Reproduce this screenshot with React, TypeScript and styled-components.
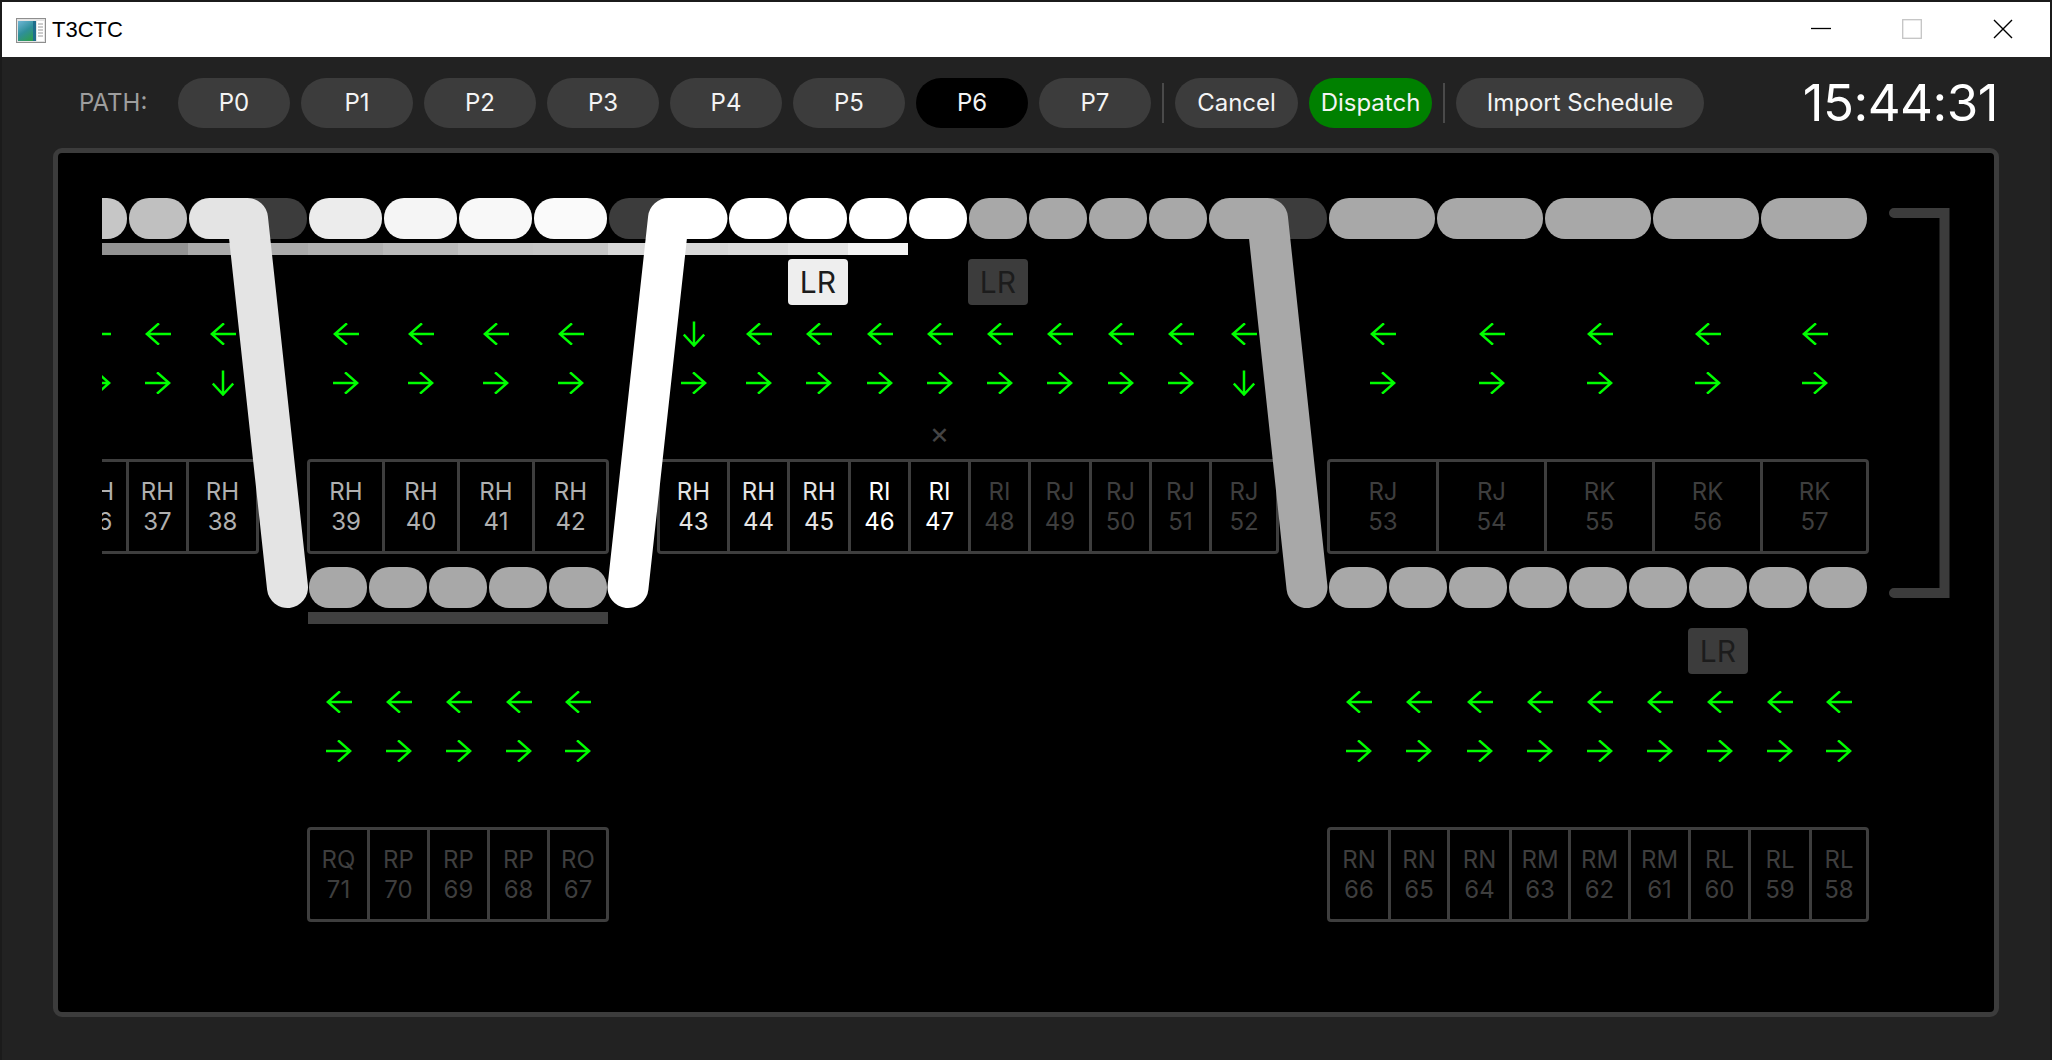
import styled, { createGlobalStyle } from 'styled-components';

type Dir = 'left' | 'right' | 'down';
type Tone = 'idle' | 'active' | 'go';

interface TrackBlock {
  width: number;
  pill: string;
  bar?: string;
  badge?: 'light' | 'dark';
}

interface BlockCell {
  prefix: string;
  num: number;
  width: number;
  color: string;
  top: Dir;
  bottom: Dir;
  mark?: boolean;
}

const DIM = '#3c3c3c';
const TRACK_GRAY = '#a8a8a8';
const LABEL_MID = '#b0b0b0';
const LABEL_BRIGHT = '#e4e4e4';
const LABEL_WHITE = '#ffffff';
const LABEL_DIM = '#3e3e3e';

const cell = (
  prefix: string,
  num: number,
  width: number,
  color: string,
  top: Dir = 'left',
  bottom: Dir = 'right',
  mark = false,
): BlockCell => ({ prefix, num, width, color, top, bottom, mark });

const repeat = (count: number, block: TrackBlock) =>
  Array.from({ length: count }, () => ({ ...block }));

const upperLine: TrackBlock[] = [
  { width: 60, pill: '#c6c6c6', bar: '#939393' },
  { width: 60, pill: '#c0c0c0', bar: '#939393' },
  { width: 120, pill: DIM, bar: '#aaaaaa' },
  { width: 75, pill: '#ececec', bar: '#b1b1b1' },
  { width: 75, pill: '#f5f5f5', bar: '#bababa' },
  { width: 75, pill: '#f8f8f8', bar: '#c4c4c4' },
  { width: 75, pill: '#fafafa', bar: '#c6c6c6' },
  { width: 120, pill: DIM, bar: '#d8d8d8' },
  { width: 60, pill: '#ffffff', bar: '#dcdcdc' },
  { width: 60, pill: '#ffffff', bar: '#e4e4e4', badge: 'light' },
  { width: 60, pill: '#ffffff', bar: '#f4f4f4' },
  { width: 60, pill: '#ffffff' },
  { width: 60, pill: TRACK_GRAY, badge: 'dark' },
  ...repeat(3, { width: 60, pill: TRACK_GRAY }),
  { width: 120, pill: DIM },
  ...repeat(5, { width: 108, pill: TRACK_GRAY }),
];

const lowerLeftLine: TrackBlock[] = repeat(5, { width: 60, pill: TRACK_GRAY, bar: '#404040' });

const lowerRightLine: TrackBlock[] = repeat(9, { width: 60, pill: TRACK_GRAY }).map((b, i) =>
  i === 6 ? { ...b, badge: 'dark' as const } : b,
);

const groupA = [
  cell('RH', 36, 57, LABEL_MID),
  cell('RH', 37, 60, LABEL_MID),
  cell('RH', 38, 70, LABEL_MID, 'left', 'down'),
];

const groupB = [
  cell('RH', 39, 72, LABEL_MID),
  cell('RH', 40, 75, LABEL_MID),
  cell('RH', 41, 75, LABEL_MID),
  cell('RH', 42, 74, LABEL_MID),
];

const groupC = [
  cell('RH', 43, 67, LABEL_BRIGHT, 'down', 'right'),
  cell('RH', 44, 60, LABEL_BRIGHT),
  cell('RH', 45, 61, LABEL_BRIGHT),
  cell('RI', 46, 60, LABEL_WHITE),
  cell('RI', 47, 60, LABEL_WHITE, 'left', 'right', true),
  cell('RI', 48, 60, LABEL_DIM),
  cell('RJ', 49, 61, LABEL_DIM),
  cell('RJ', 50, 60, LABEL_DIM),
  cell('RJ', 51, 60, LABEL_DIM),
  cell('RJ', 52, 67, LABEL_DIM, 'left', 'down'),
];

const groupD = [
  cell('RJ', 53, 106, LABEL_DIM),
  cell('RJ', 54, 108, LABEL_DIM),
  cell('RK', 55, 108, LABEL_DIM),
  cell('RK', 56, 108, LABEL_DIM),
  cell('RK', 57, 106, LABEL_DIM),
];

const groupE = [
  cell('RQ', 71, 57, LABEL_DIM),
  cell('RP', 70, 60, LABEL_DIM),
  cell('RP', 69, 60, LABEL_DIM),
  cell('RP', 68, 60, LABEL_DIM),
  cell('RO', 67, 59, LABEL_DIM),
];

const groupF = [
  cell('RN', 66, 58, LABEL_DIM),
  cell('RN', 65, 59, LABEL_DIM),
  cell('RN', 64, 62, LABEL_DIM),
  cell('RM', 63, 59, LABEL_DIM),
  cell('RM', 62, 60, LABEL_DIM),
  cell('RM', 61, 60, LABEL_DIM),
  cell('RL', 60, 60, LABEL_DIM),
  cell('RL', 59, 61, LABEL_DIM),
  cell('RL', 58, 57, LABEL_DIM),
];

const paths = ['P0', 'P1', 'P2', 'P3', 'P4', 'P5', 'P6', 'P7'];

const GlobalStyle = createGlobalStyle`
  html, body {
    margin: 0;
    padding: 0;
    background: #1b1b1b;
  }

  body {
    font-family: Inter, "Noto Sans", "Liberation Sans", sans-serif;
  }

  * {
    box-sizing: border-box;
  }
`;

const AppIcon = () => (
  <svg width="30" height="25" viewBox="0 0 30 25">
    <defs>
      <linearGradient id="appIconFill" x1="0" y1="0" x2="0.6" y2="1">
        <stop offset="0" stopColor="#6fb6d6" />
        <stop offset="0.55" stopColor="#2f8f9a" />
        <stop offset="1" stopColor="#2e9c55" />
      </linearGradient>
    </defs>
    <rect x="0.5" y="0.5" width="29" height="24" fill="#e4e4e4" stroke="#8e8e8e" />
    <rect x="2" y="3" width="18" height="20" fill="url(#appIconFill)" />
    <rect x="17" y="3" width="3" height="20" fill="#1f6e8c" />
    <rect x="21" y="3" width="7" height="20" fill="#ffffff" />
    <path d="M22 6h5M22 9h5M22 12h5M22 15h5M22 18h5" stroke="#9a9a9a" strokeWidth="1" />
  </svg>
);

const MinimizeIcon = () => (
  <svg width="20" height="20" viewBox="0 0 20 20">
    <path d="M0 9.5h20" stroke="#000" strokeWidth="1.3" />
  </svg>
);

const MaximizeIcon = () => (
  <svg width="20" height="20" viewBox="0 0 20 20">
    <rect x="0.7" y="0.7" width="18.6" height="18.6" fill="none" stroke="#c4c4c4" strokeWidth="1.3" />
  </svg>
);

const CloseIcon = () => (
  <svg width="20" height="20" viewBox="0 0 20 20">
    <path d="M1 1l18 18M19 1L1 19" stroke="#000" strokeWidth="1.4" />
  </svg>
);

const ArrowGlyph = ({ dir }: { dir: Dir }) => {
  if (dir === 'down') {
    return (
      <svg width="22" height="26" viewBox="0 0 22 26">
        <path
          d="M11 0.5V24.5M0.8 13.6L11 24.5L21.2 13.6"
          stroke="#00ff00"
          strokeWidth="2.5"
          fill="none"
        />
      </svg>
    );
  }
  const d = dir === 'left' ? 'M1.5 11H26M14 0.3L1.8 11L14 21.7' : 'M0 11H24.5M12 0.3L24.2 11L12 21.7';
  return (
    <svg width="26" height="22" viewBox="0 0 26 22">
      <path d={d} stroke="#00ff00" strokeWidth="2.5" fill="none" />
    </svg>
  );
};

const TrackLine = ({ blocks }: { blocks: TrackBlock[] }) => (
  <Line>
    {blocks.map((b, i) => (
      <Block key={i} $width={b.width}>
        <Pill $color={b.pill} />
        <Bar $color={b.bar} />
        <BadgeSlot>{b.badge && <Badge $tone={b.badge}>LR</Badge>}</BadgeSlot>
      </Block>
    ))}
  </Line>
);

const LabelGroup = ({ cells }: { cells: BlockCell[] }) => (
  <Group>
    <ArrowRow>
      {cells.map((c, i) => (
        <ArrowCell key={c.num} $width={c.width} $first={i === 0}>
          <ArrowGlyph dir={c.top} />
        </ArrowCell>
      ))}
    </ArrowRow>
    <ArrowRow $second>
      {cells.map((c, i) => (
        <ArrowCell key={c.num} $width={c.width} $first={i === 0}>
          <ArrowGlyph dir={c.bottom} />
        </ArrowCell>
      ))}
    </ArrowRow>
    <MarkRow>
      {cells.map((c, i) => (
        <ArrowCell key={c.num} $width={c.width} $first={i === 0}>
          {c.mark && <Mark>×</Mark>}
        </ArrowCell>
      ))}
    </MarkRow>
    <BoxRow>
      {cells.map((c, i) => (
        <BoxCell key={c.num} $width={c.width} $first={i === 0} $color={c.color}>
          <span>{c.prefix}</span>
          <span>{c.num}</span>
        </BoxCell>
      ))}
    </BoxRow>
  </Group>
);

const App = () => (
  <Root>
    <GlobalStyle />
    <TitleBar>
      <TitleIcon>
        <AppIcon />
      </TitleIcon>
      <Title>T3CTC</Title>
      <WindowControls>
        <ControlButton>
          <MinimizeIcon />
        </ControlButton>
        <ControlButton>
          <MaximizeIcon />
        </ControlButton>
        <ControlButton>
          <CloseIcon />
        </ControlButton>
      </WindowControls>
    </TitleBar>

    <Body>
      <Toolbar>
        <PathLabel>PATH:</PathLabel>
        {paths.map((p) => (
          <ToolButton key={p} $width={112} $tone={p === 'P6' ? 'active' : 'idle'}>
            {p}
          </ToolButton>
        ))}
        <Divider />
        <ToolButton $width={123}>Cancel</ToolButton>
        <ToolButton $width={123} $tone="go">
          Dispatch
        </ToolButton>
        <Divider />
        <ToolButton $width={248}>Import Schedule</ToolButton>
        <Clock>15:44:31</Clock>
      </Toolbar>

      <Board>
        <Viewport>
          <Canvas>
            <DiagramRow $indent={-34} $top={0}>
              <TrackLine blocks={upperLine} />
            </DiagramRow>

            <DiagramRow $indent={-36} $top={18} $gap={48}>
              <LabelGroup cells={groupA} />
              <LabelGroup cells={groupB} />
              <LabelGroup cells={groupC} />
              <LabelGroup cells={groupD} />
            </DiagramRow>

            <DiagramRow $indent={206} $top={13} $gap={720}>
              <TrackLine blocks={lowerLeftLine} />
              <TrackLine blocks={lowerRightLine} />
            </DiagramRow>

            <DiagramRow $indent={205} $top={17} $gap={718}>
              <LabelGroup cells={groupE} />
              <LabelGroup cells={groupF} />
            </DiagramRow>
          </Canvas>

          <Switches>
            <polyline
              points="107.5,65.5 145.5,65.5 185.5,434.5"
              stroke="#e4e4e4"
              strokeWidth="41"
              strokeLinecap="round"
              strokeLinejoin="round"
              fill="none"
            />
            <polyline
              points="605,65.5 566.5,65.5 526,434.5"
              stroke="#ffffff"
              strokeWidth="41"
              strokeLinecap="round"
              strokeLinejoin="round"
              fill="none"
            />
            <polyline
              points="1127.5,65.5 1165.5,65.5 1205,434.5"
              stroke={TRACK_GRAY}
              strokeWidth="41"
              strokeLinecap="round"
              strokeLinejoin="round"
              fill="none"
            />
            <polyline
              points="1792,60 1842.5,60 1842.5,440 1792,440"
              stroke={DIM}
              strokeWidth="10"
              strokeLinecap="round"
              strokeLinejoin="miter"
              fill="none"
            />
          </Switches>
        </Viewport>
      </Board>
    </Body>
  </Root>
);

export default App;

const Root = styled.div`
  display: flex;
  flex-direction: column;
  width: 2052px;
  height: 1060px;
  padding: 2px 2px 0;
  background: #1b1b1b;
`;

const TitleBar = styled.div`
  display: flex;
  align-items: center;
  height: 55px;
  padding-left: 14px;

  background: #ffffff;
`;

const TitleIcon = styled.div`
  display: flex;
  margin-top: 2px;
`;

const Title = styled.div`
  margin-left: 6px;

  font-family: "Liberation Sans", Arial, sans-serif;
  font-size: 22px;
  color: #000;
`;

const WindowControls = styled.div`
  display: flex;
  align-self: stretch;
  margin-left: auto;
  margin-right: 2px;
`;

const ControlButton = styled.div`
  display: flex;
  justify-content: center;
  align-items: center;
  width: 91px;
  padding-bottom: 2px;
`;

const Body = styled.div`
  display: flex;
  flex-direction: column;
  flex: 1;
  min-height: 0;

  background: #222222;
`;

const Toolbar = styled.div`
  display: flex;
  align-items: center;
  gap: 11px;
  height: 91px;
  padding: 0 52px 0 77px;
`;

const PathLabel = styled.div`
  width: 88px;

  font-size: 24px;
  color: #9e9e9e;
`;

const ToolButton = styled.button<{ $width: number; $tone?: Tone }>`
  display: flex;
  justify-content: center;
  align-items: center;
  flex-shrink: 0;
  width: ${({ $width }) => $width}px;
  height: 50px;
  padding: 0;
  border: none;
  border-radius: 25px;

  background: ${({ $tone }) =>
    $tone === 'active' ? '#000000' : $tone === 'go' ? '#008000' : '#3c3c3c'};
  color: #f4f4f4;
  font-family: inherit;
  font-size: 24px;
  font-weight: 400;
`;

const Divider = styled.div`
  flex-shrink: 0;
  width: 2px;
  height: 40px;

  background: #4a4a4a;
`;

const Clock = styled.div`
  margin-left: auto;

  font-size: 51px;
  font-weight: 400;
  color: #ffffff;
  letter-spacing: -0.5px;
`;

const Board = styled.div`
  display: flex;
  flex: 1;
  min-height: 0;
  margin: 0 51px 43px;
  padding-left: 44px;
  border: 5px solid #3c3c3c;
  border-radius: 9px;

  background: #000000;
`;

const Viewport = styled.div`
  position: relative;
  flex: 1;
  overflow: hidden;
`;

const Canvas = styled.div`
  display: flex;
  flex-direction: column;
  align-items: flex-start;
  padding-top: 45px;
`;

const DiagramRow = styled.div<{ $indent: number; $top: number; $gap?: number }>`
  display: flex;
  align-items: flex-start;
  gap: ${({ $gap }) => $gap ?? 0}px;
  margin-top: ${({ $top }) => $top}px;
  margin-left: ${({ $indent }) => $indent}px;
`;

const Line = styled.div`
  display: flex;
`;

const Block = styled.div<{ $width: number }>`
  display: flex;
  flex-direction: column;
  align-items: stretch;
  width: ${({ $width }) => $width}px;
`;

const Pill = styled.div<{ $color: string }>`
  height: 41px;
  margin: 0 1px;
  border-radius: 20px;

  background: ${({ $color }) => $color};
`;

const Bar = styled.div<{ $color?: string }>`
  height: 12px;
  margin-top: 4px;

  background: ${({ $color }) => $color ?? 'transparent'};
`;

const BadgeSlot = styled.div`
  display: flex;
  justify-content: center;
  height: 46px;
  margin-top: 4px;
`;

const Badge = styled.div<{ $tone: 'light' | 'dark' }>`
  display: flex;
  justify-content: center;
  align-items: center;
  width: 60px;
  height: 46px;
  border-radius: 4px;

  background: ${({ $tone }) => ($tone === 'light' ? '#eeeeee' : '#3c3c3c')};
  color: #1c1c1c;
  font-size: 30px;
`;

const Group = styled.div`
  display: flex;
  flex-direction: column;
`;

const ArrowRow = styled.div<{ $second?: boolean }>`
  display: flex;
  align-items: center;
  height: 22px;
  margin-top: ${({ $second }) => ($second ? 27 : 0)}px;
  padding: 0 3px;
`;

const ArrowCell = styled.div<{ $width: number; $first: boolean }>`
  display: flex;
  justify-content: center;
  align-items: center;
  width: ${({ $width }) => $width}px;
  padding-left: ${({ $first }) => ($first ? 0 : 3)}px;
`;

const MarkRow = styled.div`
  display: flex;
  align-items: flex-start;
  height: 65px;
  padding: 24px 3px 0;
`;

const Mark = styled.span`
  font-size: 30px;
  line-height: 30px;
  color: #444444;
`;

const BoxRow = styled.div`
  display: flex;
  height: 95px;
  border: 3px solid #3e3e3e;
  border-radius: 4px;
`;

const BoxCell = styled.div<{ $width: number; $first: boolean; $color: string }>`
  display: flex;
  flex-direction: column;
  justify-content: center;
  align-items: center;
  width: ${({ $width }) => $width}px;
  border-left: ${({ $first }) => ($first ? 'none' : '3px solid #3e3e3e')};

  color: ${({ $color }) => $color};
  font-size: 24px;
  line-height: 30px;
`;

const Switches = styled.svg`
  position: absolute;
  top: 0;
  left: 0;
  width: 100%;
  height: 100%;
  overflow: visible;
  pointer-events: none;
`;
